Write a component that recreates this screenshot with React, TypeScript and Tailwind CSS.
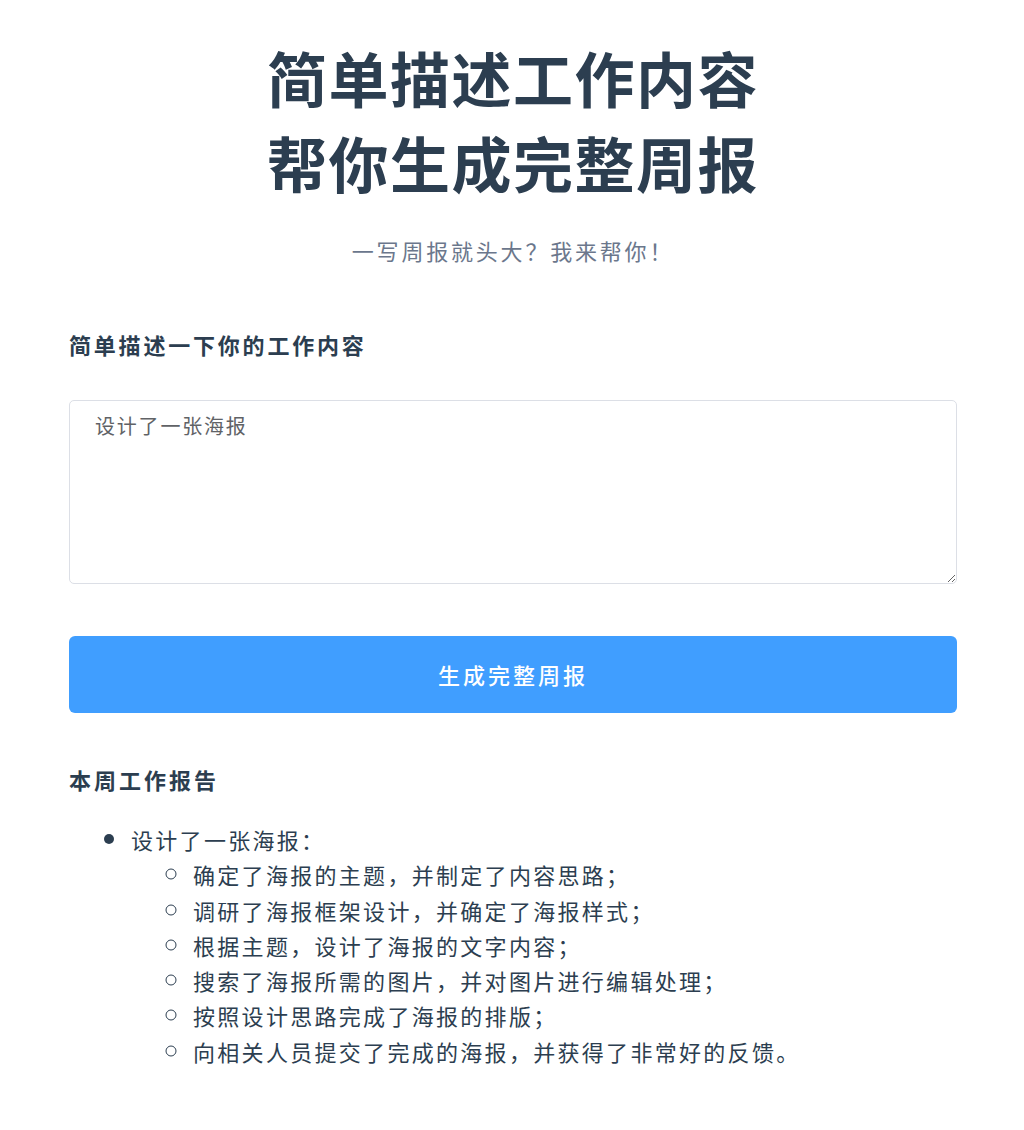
export default function App() {
  const items = [
    "确定了海报的主题，并制定了内容思路；",
    "调研了海报框架设计，并确定了海报样式；",
    "根据主题，设计了海报的文字内容；",
    "搜索了海报所需的图片，并对图片进行编辑处理；",
    "按照设计思路完成了海报的排版；",
    "向相关人员提交了完成的海报，并获得了非常好的反馈。",
  ];

  return (
    <main
      className="min-h-screen bg-white text-[#2c3e50] pl-[69px] pr-[67px] pt-[34px] pb-16"
      style={{ fontFamily: '"Noto Sans CJK SC", "Noto Sans", sans-serif' }}
    >
      {/* 标题 */}
      <h1 className="text-[60px] font-bold leading-[85px] text-center tracking-[1.5px]">
        简单描述工作内容
        <br />
        帮你生成完整周报
      </h1>
      <p className="mt-[31px] text-[22px] leading-[30px] text-[#6b778c] text-center tracking-[2.8px]">
        一写周报就头大？我来帮你！
      </p>

      {/* 输入区域 */}
      <h2 className="mt-[63px] text-[22px] font-bold leading-[32px] tracking-[2.8px]">
        简单描述一下你的工作内容
      </h2>
      <textarea
        className="mt-[40px] block w-full h-[184px] border border-[#dcdfe6] rounded-[5px] px-[25px] py-[9px] text-[20px] leading-[32px] text-[#606266] tracking-[1.8px] outline-none"
        defaultValue="设计了一张海报"
      />

      <button className="mt-[52px] w-full h-[77px] bg-[#409eff] rounded-[6px] text-white text-[22px] font-medium tracking-[3px]">
        生成完整周报
      </button>

      {/* 结果 */}
      <h3 className="mt-[50px] text-[22px] font-bold leading-[32px] tracking-[3px]">
        本周工作报告
      </h3>
      <ul className="mt-[27px] list-disc pl-[62px] text-[22px] leading-[35.3px] tracking-[2.3px] marker:text-[26px] marker:leading-[0px]">
        <li>
          设计了一张海报：
          <ul className="list-[circle] pl-[62px]">
            {items.map((t) => (
              <li key={t}>{t}</li>
            ))}
          </ul>
        </li>
      </ul>
    </main>
  );
}
